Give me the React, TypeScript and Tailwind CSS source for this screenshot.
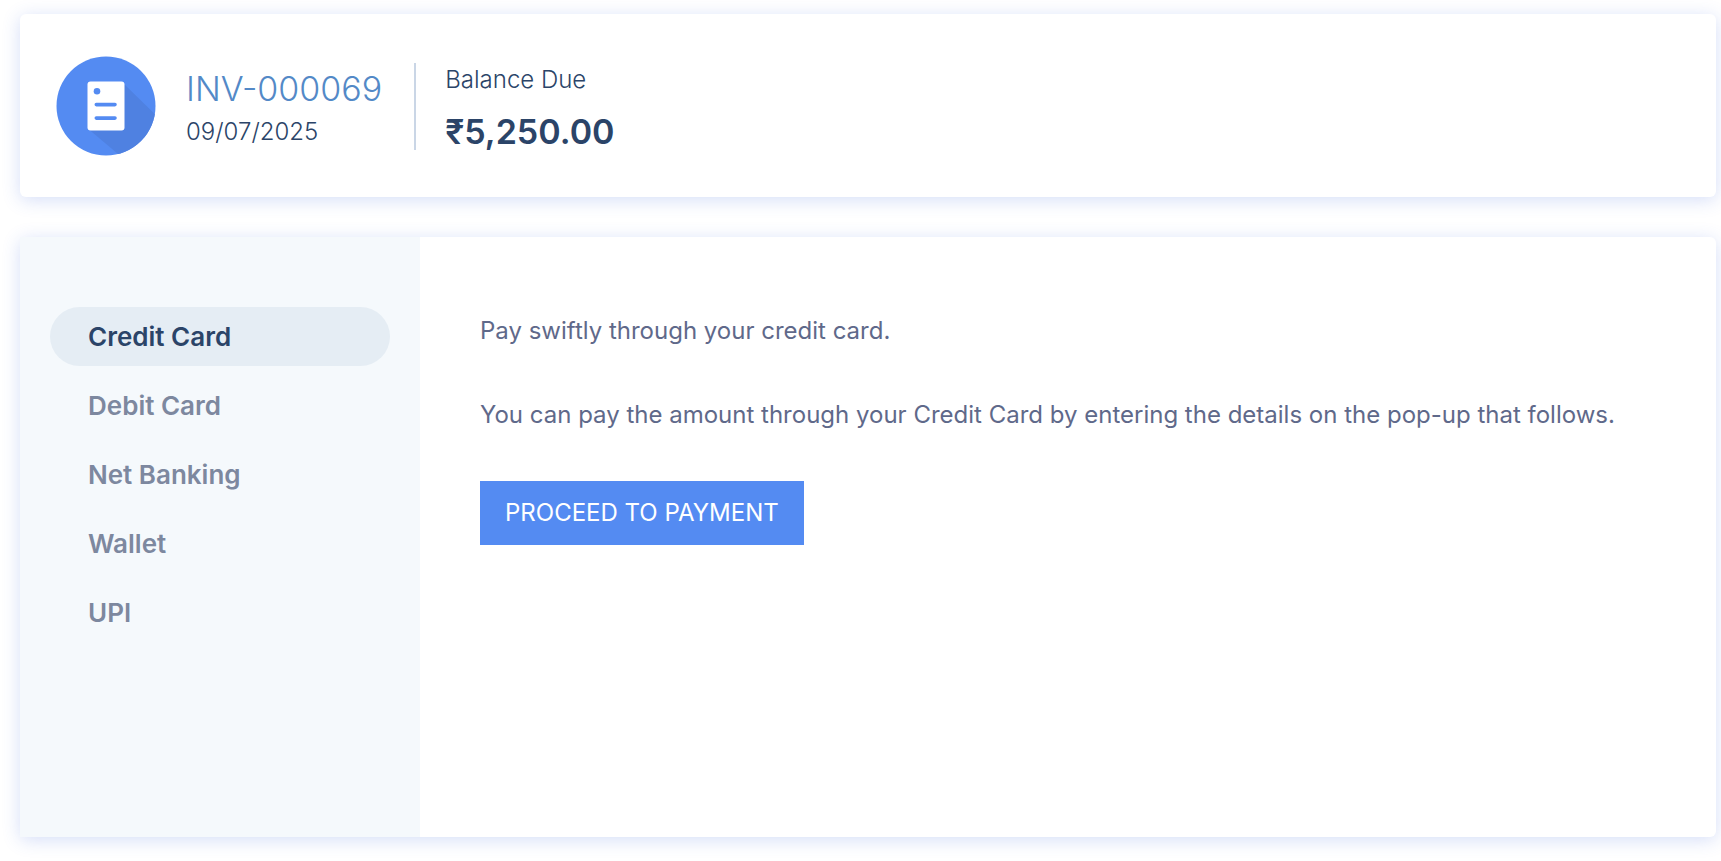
import { useState } from "react";

const methods = [
  { name: "Credit Card", noun: "credit card" },
  { name: "Debit Card", noun: "debit card" },
  { name: "Net Banking", noun: "net banking" },
  { name: "Wallet", noun: "wallet" },
  { name: "UPI", noun: "UPI" },
];

function InvoiceIcon() {
  return (
    <svg viewBox="0 0 100 100" className="size-[100px] shrink-0" aria-hidden="true">
      <defs>
        <clipPath id="disc">
          <circle cx="50" cy="50" r="49.5" />
        </clipPath>
      </defs>
      <circle cx="50" cy="50" r="49.5" fill="#548bf2" />
      <path d="M67 27L108 67L108 130L90 123L62 98L33 73.500Z" fill="#4f81e1" clipPath="url(#disc)" />
      <rect x="31.500" y="25.500" width="37" height="49" rx="3" fill="#fff" />
      <circle cx="41" cy="35.300" r="3.300" fill="#548bf2" />
      <path d="M40.300 48.600H59M40.300 62.100H59" stroke="#548bf2" strokeWidth="3.600" strokeLinecap="round" />
    </svg>
  );
}

export default function App() {
  const [selected, setSelected] = useState(0);
  const { name, noun } = methods[selected];

  return (
    <div className="flex min-h-screen flex-col gap-10 overflow-x-hidden bg-white pt-3.5 pr-[5px] pb-6 pl-5 font-['Inter',sans-serif] text-2xl text-[#2b4468]">
      <header className="flex items-center rounded-md bg-white px-9 pt-[42px] pb-[41px] shadow-[0_3px_18px_rgba(65,105,225,0.22)]">
        <InvoiceIcon />
        <div className="ml-[30px] flex flex-col gap-[3px] pt-1 font-light">
          <a href="#invoice" className="text-[34px] leading-[44px] text-[#5389c7]">
            INV-000069
          </a>
          <span className="leading-9">09/07/2025</span>
        </div>
        <div className="ml-8 flex h-[87px] flex-col justify-between border-l-2 border-[#cad6e6] pl-[29px]">
          <span className="leading-[34px] font-light">Balance Due</span>
          <strong className="text-[34px] leading-9 font-semibold">₹5,250.00</strong>
        </div>
      </header>

      <main className="flex min-h-[600px] rounded-md bg-white shadow-[0_3px_18px_rgba(65,105,225,0.22)]">
        <nav aria-label="Payment methods" className="flex w-[400px] shrink-0 flex-col gap-2.5 bg-[#f5f9fc] px-[30px] py-[70px]">
          {methods.map((method, index) => (
            <button
              key={method.name}
              type="button"
              aria-pressed={index === selected}
              onClick={() => setSelected(index)}
              className={
                index === selected
                  ? "h-[59px] cursor-pointer rounded-full bg-[#e5edf4] px-[38px] pt-0.5 text-left text-[26px] font-semibold text-[#2b4468]"
                  : "h-[59px] cursor-pointer rounded-full px-[38px] pt-0.5 text-left text-[26px] font-semibold text-[#7d889f]"
              }
            >
              {method.name}
            </button>
          ))}
        </nav>
        <section className="flex flex-1 flex-col items-start gap-12 px-[60px] py-[76px] leading-9 text-[#5f698a]">
          <p>Pay swiftly through your {noun}.</p>
          <p>You can pay the amount through your {name} by entering the details on the pop-up that follows.</p>
          <button type="button" className="h-16 cursor-pointer bg-[#548bf2] px-[25px] text-white">
            PROCEED TO PAYMENT
          </button>
        </section>
      </main>
    </div>
  );
}
